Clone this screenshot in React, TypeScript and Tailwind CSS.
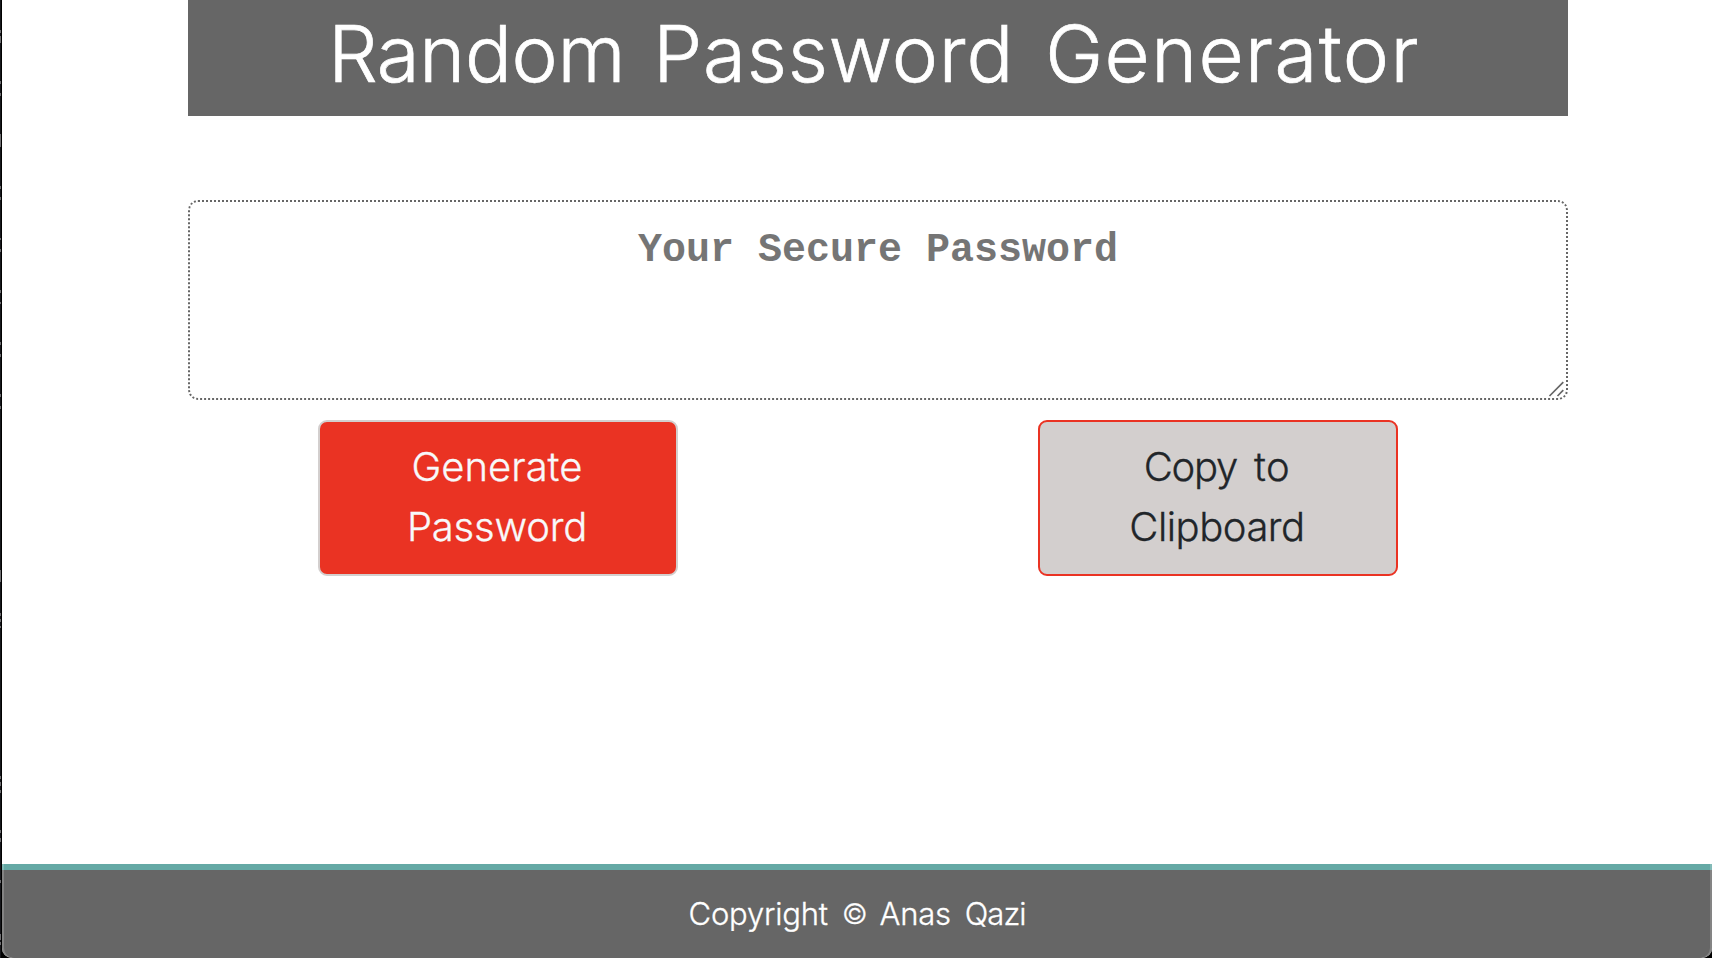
const edgeMarks: [number, number][] = [
  [30, 3], [36, 3], [39, 4], [81, 3], [93, 3], [134, 13], [186, 3], [197, 3], [238, 2], [249, 3], [290, 3],
  [302, 2], [342, 3], [354, 3], [394, 3], [406, 3], [570, 12], [613, 3], [619, 3], [626, 2],
  [776, 3], [782, 4], [790, 3], [830, 3], [838, 4], [880, 3], [934, 6], [942, 3],
];

function WindowEdge() {
  return (
    <svg className="h-full w-0.5 shrink-0" viewBox="0 0 2 958" aria-hidden="true">
      <rect width="1" height="958" fill="#16171b" />
      {edgeMarks.map(([y, h]) => (
        <rect key={y} y={y} width="1" height={h} fill="#6f6f72" />
      ))}
    </svg>
  );
}

function ResizeGrip() {
  return (
    <svg
      className="pointer-events-none absolute right-[4px] bottom-[3px] h-[16px] w-[16px]"
      viewBox="0 0 16 16"
      fill="none"
      stroke="#666666"
      strokeWidth="1.7"
      aria-hidden="true"
    >
      <path d="M1.5 15 15.3 1.2M9.5 15 15.3 9.2" />
    </svg>
  );
}

export default function App() {
  return (
    <div className="flex h-[958px] w-[1712px] overflow-hidden bg-black font-['Inter',sans-serif] font-light">
      <WindowEdge />
      <div className="relative flex min-w-0 grow flex-col overflow-hidden rounded-b-[10px] bg-white">
        <main className="ml-[186px] flex w-[1380px] grow flex-col">
          <h1 className="flex h-[116px] items-center justify-center gap-[28px] bg-[#666666] pr-[8px] pb-[8px] text-[78px] leading-none text-white [-webkit-text-stroke:0.7px_currentColor]">
            <span className="tracking-[-0.3px]">Random</span>
            <span className="tracking-[0.8px]">Password</span>
            <span className="ml-[3px] tracking-[1.4px]">Generator</span>
          </h1>
          <div className="relative mt-[84px] h-[200px]">
            <textarea
              className="block h-full w-full resize-none rounded-[10px] border-2 border-dotted border-[#666666] pt-[19px] text-center font-['Liberation_Mono',monospace] text-[40px] leading-[60px] font-bold placeholder:text-[#757575]"
              placeholder="Your Secure Password"
            />
            <ResizeGrip />
          </div>
          <div className="mt-5 flex justify-between pr-[170px] pl-[130px] text-[40px] leading-[60px] [-webkit-text-stroke:0.3px_currentColor]">
            <button className="h-[156px] w-[360px] rounded-[9px] border-2 border-[#d3cfce] bg-[#ea3323] pr-[2px] pb-[2px] text-[#f8f9fa]">
              <span>Generate</span>
              <br />
              <span className="tracking-[-0.2px]">Password</span>
            </button>
            <button className="h-[156px] w-[360px] rounded-[9px] border-2 border-[#ea3323] bg-[#d3cfce] pr-[2px] pb-[2px] text-[#212529]">
              <span className="tracking-[-1.3px]">Copy</span>
              <span className="ml-[17px] tracking-[0.5px]">to</span>
              <br />
              <span className="tracking-[-0.5px]">Clipboard</span>
            </button>
          </div>
        </main>
        <footer className="flex h-[94px] items-center justify-center gap-[12px] border-t-[6px] border-[#65a9a5] bg-[#666666] text-[31px] text-white [-webkit-text-stroke:0.3px_currentColor]">
          <span className="tracking-[-0.2px]">Copyright</span>
          <span className="ml-[2px] text-[28px]">©</span>
          <span className="tracking-[-0.2px]">Anas</span>
          <span className="ml-[2px] tracking-[-1px]">Qazi</span>
        </footer>
        <div className="pointer-events-none absolute inset-x-0 top-0 -bottom-[2px] rounded-b-[12px] border-x-2 border-b-2 border-white/20" />
      </div>
    </div>
  );
}
